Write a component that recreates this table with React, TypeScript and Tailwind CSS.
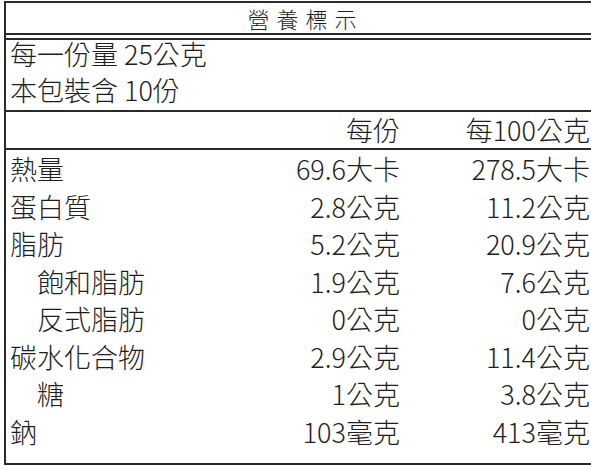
import React from "react";

const rows: { label: string; a: string; b: string; indent?: boolean }[] = [
  { label: "熱量", a: "69.6大卡", b: "278.5大卡" },
  { label: "蛋白質", a: "2.8公克", b: "11.2公克" },
  { label: "脂肪", a: "5.2公克", b: "20.9公克" },
  { label: "飽和脂肪", a: "1.9公克", b: "7.6公克", indent: true },
  { label: "反式脂肪", a: "0公克", b: "0公克", indent: true },
  { label: "碳水化合物", a: "2.9公克", b: "11.4公克" },
  { label: "糖", a: "1公克", b: "3.8公克", indent: true },
  { label: "鈉", a: "103毫克", b: "413毫克" },
];

export default function App() {
  return (
    <div
      className="w-[591px] h-[471px] bg-white pl-[4px] pt-[1px] text-[#1e1e1e] overflow-hidden"
      style={{ fontFamily: '"Noto Sans CJK TC", "Noto Sans", sans-serif' }}
    >
      <div className="border-l-2 border-t-2 border-[#2a2a2a] h-[464px] flex flex-col">
        <div className="h-[30px] text-center text-[22px] font-light tracking-[7px] pl-[14px] leading-[30px]">
          營養標示
        </div>
        <div className="border-t-2 border-[#2a2a2a] h-[5px]" />
        <div className="border-t-2 border-[#2a2a2a]" />
        <div className="h-[70px] pl-[4px] text-[27px] font-light">
          <div className="-mt-[4px]">
            <div className="h-[36px] leading-[36px]">每一份量 25公克</div>
            <div className="h-[36px] leading-[36px]">本包裝含 10份</div>
          </div>
        </div>
        <div className="border-t-2 border-[#2a2a2a]" />
        <div className="h-[36px] grid grid-cols-[1fr_150px_190px] text-[27px] font-light leading-[36px] pr-[1px]">
          <div />
          <div className="text-right">每份</div>
          <div className="text-right">每100公克</div>
        </div>
        <div className="border-t-2 border-[#2a2a2a]" />
        <div className="flex flex-col pr-[1px] text-[27px] font-light leading-[37.5px]">
          {rows.map((r) => (
            <div key={r.label} className="h-[37.5px] grid grid-cols-[1fr_150px_190px]">
              <div className={r.indent ? "pl-[31px]" : "pl-[4px]"}>{r.label}</div>
              <div className="text-right">{r.a}</div>
              <div className="text-right">{r.b}</div>
            </div>
          ))}
        </div>
        <div className="flex-1" />
        <div className="border-t-2 border-[#2a2a2a]" />
      </div>
    </div>
  );
}
